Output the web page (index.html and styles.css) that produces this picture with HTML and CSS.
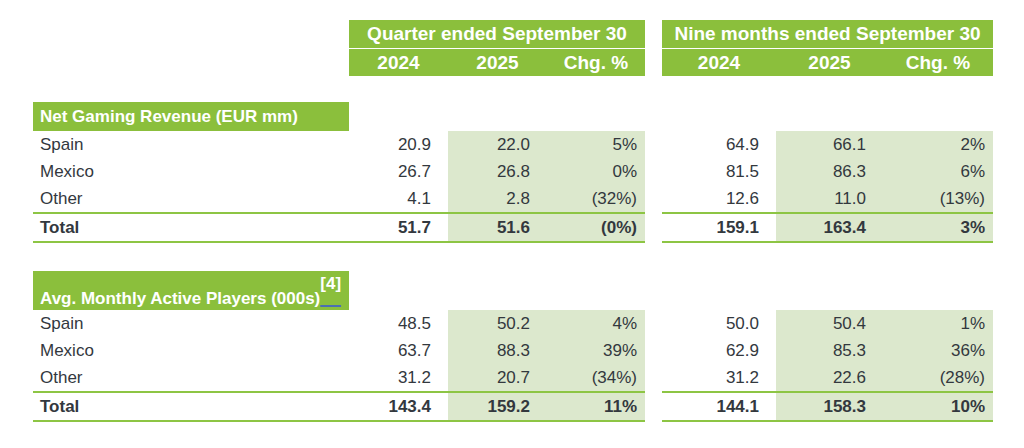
FILE: index.html
```html
<!DOCTYPE html>
<html lang="en">
<head>
<meta charset="utf-8">
<title>Net Gaming Revenue and Active Players</title>
<link rel="stylesheet" href="styles.css">
</head>
<body>
<div class="page">
  <div class="hrow hrow-top">
    <div></div>
    <div class="hcell span3">Quarter ended September 30</div>
    <div></div>
    <div class="hcell span3">Nine months ended September 30</div>
  </div>
  <div class="hrow hrow-sub">
    <div></div>
    <div class="hcell">2024</div>
    <div class="hcell">2025</div>
    <div class="hcell">Chg. %</div>
    <div></div>
    <div class="hcell">2024</div>
    <div class="hcell">2025</div>
    <div class="hcell">Chg. %</div>
  </div>

  <section class="block block-first">
    <div class="row label-row">
      <div class="label">Net Gaming Revenue (EUR mm)</div>
    </div>
    <div class="row">
      <div class="name">Spain</div><div class="num">20.9</div><div class="num shade">22.0</div><div class="num chg shade">5%</div><div class="gap"></div><div class="num">64.9</div><div class="num shade">66.1</div><div class="num chg shade">2%</div>
    </div>
    <div class="row">
      <div class="name">Mexico</div><div class="num">26.7</div><div class="num shade">26.8</div><div class="num chg shade">0%</div><div class="gap"></div><div class="num">81.5</div><div class="num shade">86.3</div><div class="num chg shade">6%</div>
    </div>
    <div class="row">
      <div class="name">Other</div><div class="num">4.1</div><div class="num shade">2.8</div><div class="num chg shade">(32%)</div><div class="gap"></div><div class="num">12.6</div><div class="num shade">11.0</div><div class="num chg shade">(13%)</div>
    </div>
    <div class="row total">
      <div class="name">Total</div><div class="num">51.7</div><div class="num shade">51.6</div><div class="num chg shade">(0%)</div><div class="gap"></div><div class="num">159.1</div><div class="num shade">163.4</div><div class="num chg shade">3%</div>
    </div>
  </section>

  <section class="block block-second">
    <div class="row label-row label-row-tall">
      <div class="label">Avg. Monthly Active Players (000s)<span class="fn"><sup>[4]</sup></span></div>
    </div>
    <div class="row">
      <div class="name">Spain</div><div class="num">48.5</div><div class="num shade">50.2</div><div class="num chg shade">4%</div><div class="gap"></div><div class="num">50.0</div><div class="num shade">50.4</div><div class="num chg shade">1%</div>
    </div>
    <div class="row">
      <div class="name">Mexico</div><div class="num">63.7</div><div class="num shade">88.3</div><div class="num chg shade">39%</div><div class="gap"></div><div class="num">62.9</div><div class="num shade">85.3</div><div class="num chg shade">36%</div>
    </div>
    <div class="row">
      <div class="name">Other</div><div class="num">31.2</div><div class="num shade">20.7</div><div class="num chg shade">(34%)</div><div class="gap"></div><div class="num">31.2</div><div class="num shade">22.6</div><div class="num chg shade">(28%)</div>
    </div>
    <div class="row total">
      <div class="name">Total</div><div class="num">143.4</div><div class="num shade">159.2</div><div class="num chg shade">11%</div><div class="gap"></div><div class="num">144.1</div><div class="num shade">158.3</div><div class="num chg shade">10%</div>
    </div>
  </section>
</div>
</body>
</html>
```

FILE: styles.css
```css
html, body {
  margin: 0;
  padding: 0;
  background: #ffffff;
}

.page {
  padding: 20px 0 0 33px;
  font-family: "Liberation Sans", Arial, Helvetica, sans-serif;
  color: #33383e;
  font-size: 17px;
}

.hrow,
.row {
  display: grid;
  grid-template-columns: 316px 99px 99px 98px 17px 114px 107px 110px;
}

.hrow {
  color: #ffffff;
  font-weight: bold;
  font-size: 19px;
}

.hrow-top {
  height: 28px;
  line-height: 28px;
  margin-bottom: 1px;
}

.hrow-sub {
  height: 27px;
  line-height: 27px;
}

.hcell {
  background: #8bbf3c;
  text-align: center;
  white-space: nowrap;
}

.span3 {
  grid-column: span 3;
}

.block-first {
  margin-top: 26px;
}

.block-second {
  margin-top: 28px;
}

.row {
  height: 27px;
  line-height: 27px;
}

.label-row {
  height: 29px;
  line-height: 29px;
}

.label {
  background: #8bbf3c;
  color: #ffffff;
  font-weight: bold;
  padding-left: 7px;
  white-space: nowrap;
}

.label-row-tall {
  height: 39px;
  line-height: 20px;
}

.label-row-tall .label {
  padding-top: 13px;
  box-sizing: border-box;
  height: 39px;
}

.fn {
  text-decoration: underline;
  text-decoration-color: #4a6fb3;
  text-decoration-thickness: 2px;
  text-underline-offset: 1px;
}

.fn sup {
  font-size: 17px;
  vertical-align: 15px;
  line-height: 0;
}

.name {
  padding-left: 7px;
}

.num {
  text-align: right;
  padding-right: 17px;
}

.num.chg {
  padding-right: 8px;
}

.shade {
  background: #dce8cd;
}

.total {
  height: auto;
  font-weight: bold;
}

.total > div {
  border-top: 2px solid #8dc544;
  border-bottom: 2px solid #8dc544;
}

.total > .gap {
  border-color: transparent;
}
```
